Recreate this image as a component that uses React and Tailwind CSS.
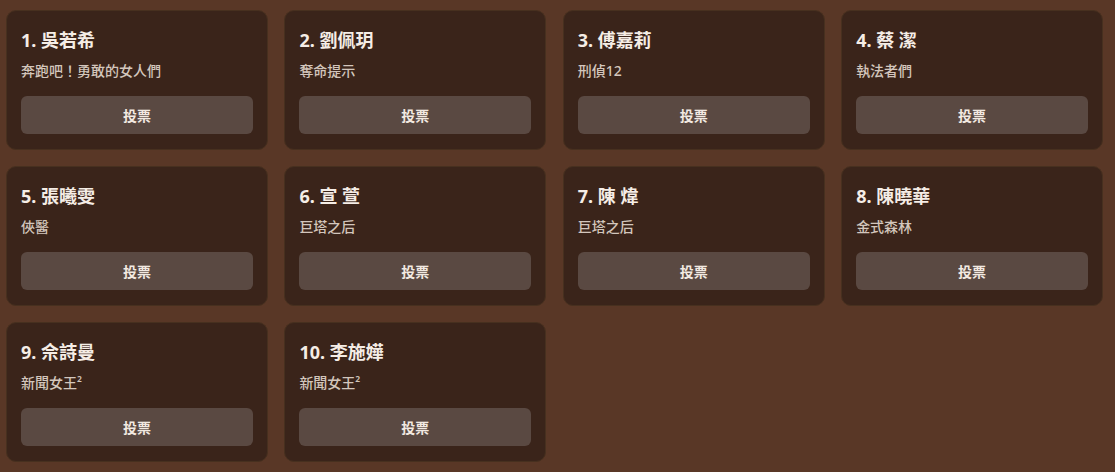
const ACTRESSES = [
  { name: "吳若希", show: "奔跑吧！勇敢的女人們" },
  { name: "劉佩玥", show: "奪命提示" },
  { name: "傅嘉莉", show: "刑偵12" },
  { name: "蔡 潔", show: "執法者們" },
  { name: "張曦雯", show: "俠醫" },
  { name: "宣 萱", show: "巨塔之后" },
  { name: "陳 煒", show: "巨塔之后" },
  { name: "陳曉華", show: "金式森林" },
  { name: "佘詩曼", show: "新聞女王²" },
  { name: "李施嬅", show: "新聞女王²" },
];

export default function App() {
  return (
    <div
      className="w-[1115px] h-[472px] bg-[#593726] pl-[6px] pt-[10px] overflow-hidden"
      style={{ fontFamily: '"Noto Sans", "Noto Sans CJK TC", sans-serif' }}
    >
      {/* GRID */}
      <div className="grid grid-cols-4 gap-x-[16.5px] gap-y-4 w-[1097px]">
        {ACTRESSES.map((a, i) => (
          <div
            key={i}
            className="h-[140px] bg-[#3a241a] border border-[#47301f] rounded-[10px] px-[14px] pt-[15px] flex flex-col"
          >
            <div className="text-[18px] leading-[28px] font-bold text-[#f5ede6]">
              {i + 1}. {a.name}
            </div>
            <div className="mt-[7px] text-[14px] leading-[20px] font-medium text-[#d3c6bc]">
              {a.show}
            </div>
            <button className="mt-[15px] h-[38px] w-full rounded-[6px] bg-[#5a4942] text-[14px] font-bold text-[#f2e9e1]">
              投票
            </button>
          </div>
        ))}
      </div>
    </div>
  );
}
